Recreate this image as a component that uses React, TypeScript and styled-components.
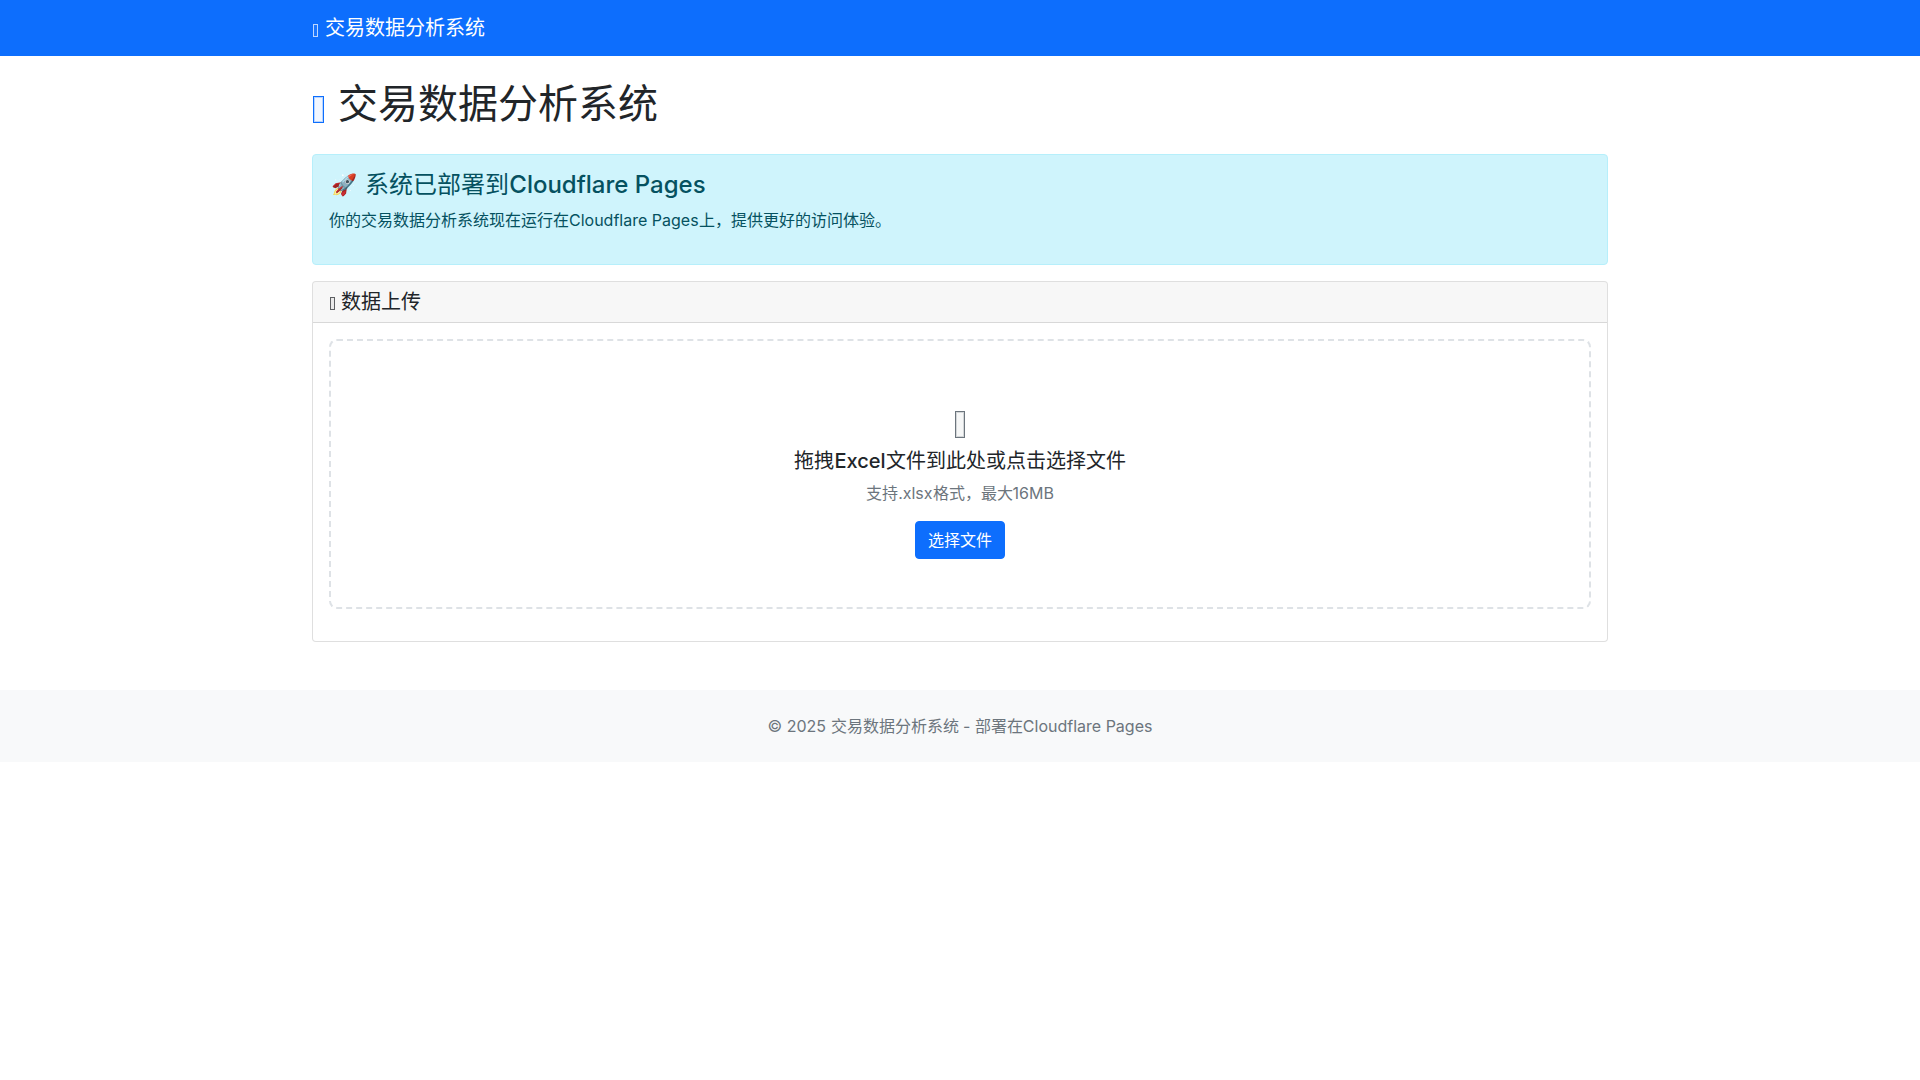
import React from "react";
import styled, { createGlobalStyle } from "styled-components";

const Global = createGlobalStyle`
  * , *::before, *::after { box-sizing: border-box; }
  body {
    margin: 0;
    font-family: Inter, sans-serif;
    font-size: 16px;
    line-height: 1.5;
    color: #212529;
    background: #fff;
  }
`;

/* The reference shows the empty "missing glyph" box of an icon font that did not load. */
const MissingGlyph = styled.i<{ $color?: string; $large?: boolean }>`
  display: inline-block;
  width: 0.27em;
  height: 0.67em;
  margin: 0 0.35em 0 0.03em;
  vertical-align: -0.12em;
  color: ${(p) => p.$color ?? "inherit"};
  border: 1px solid
    color-mix(in srgb, currentColor ${(p) => (p.$large ? 100 : 70)}%, transparent);
  background: color-mix(in srgb, currentColor 6%, transparent);
  box-shadow: ${(p) =>
    p.$large
      ? "inset 0 0 0 1px color-mix(in srgb, currentColor 25%, transparent)"
      : "none"};
`;
const CardGlyph = styled(MissingGlyph)`
  margin-right: 0.29em;
  vertical-align: -0.08em;
`;
const DropGlyph = styled(MissingGlyph)`
  display: block;
  font-size: 40px;
  margin: 22px auto 11px;
`;

const Navbar = styled.nav`
  background: #0d6efd;
  padding: 8px 0;
`;
const Container = styled.div`
  width: 1320px;
  margin: 0 auto;
  padding: 0 12px;
`;
const Brand = styled.a`
  display: inline-block;
  padding: 5px 0;
  font-size: 20px;
  line-height: 30px;
  color: #fff;
`;
const Main = styled(Container)`
  margin-top: 24px;
`;
const Title = styled.h1`
  margin: 0 0 26px;
  font-size: 40px;
  font-weight: 500;
  line-height: 1.2;
`;
const Alert = styled.div`
  padding: 16px;
  margin-bottom: 16px;
  color: #055160;
  background: #cff4fc;
  border: 1px solid #b6effb;
  border-radius: 4px;
`;
const AlertHeading = styled.h4`
  margin: 0 0 8px;
  font-size: 24px;
  font-weight: 500;
  line-height: 1.2;
`;
const Emoji = styled.span`
  display: inline-block;
  width: 29.9px;
  font-size: 21px;
  line-height: 1;
  text-align: center;
  vertical-align: 1px;
`;
const AlertText = styled.p`
  margin: 0 0 16px;
`;
const Card = styled.section`
  background: #fff;
  border: 1px solid rgba(0, 0, 0, 0.125);
  border-radius: 4px;
`;
const CardHeader = styled.div`
  padding: 8px 16px;
  background: rgba(0, 0, 0, 0.03);
  border-bottom: 1px solid rgba(0, 0, 0, 0.125);
  border-radius: 3px 3px 0 0;
`;
const CardTitle = styled.h5`
  margin: 0;
  font-size: 20px;
  font-weight: 500;
  line-height: 1.2;
`;
const CardBody = styled.div`
  padding: 16px;
`;
const DropZone = styled.div`
  padding: 48px;
  margin-bottom: 16px;
  border: 2px dashed #dee2e6;
  border-radius: 8px;
  text-align: center;
`;
const DropTitle = styled.h5`
  margin: 0 0 8px;
  font-size: 20px;
  font-weight: 500;
  line-height: 1.2;
`;
const DropHint = styled.p`
  margin: 0 0 16px;
  color: #6c757d;
`;
const Button = styled.button`
  display: inline-block;
  padding: 6px 12px;
  font: inherit;
  color: #fff;
  background: #0d6efd;
  border: 1px solid #0d6efd;
  border-radius: 4px;
`;
const Footer = styled.footer`
  margin-top: 48px;
  padding: 24px 0;
  background: #f8f9fa;
  text-align: center;
  color: #6c757d;
`;

export default function App() {
  return (
    <div lang="zh-CN">
      <Global />
      <Navbar>
        <Container>
          <Brand>
            <MissingGlyph />交易数据分析系统
          </Brand>
        </Container>
      </Navbar>
      <Main>
        <Title>
          <MissingGlyph $large $color="#0d6efd" />交易数据分析系统
        </Title>
        <Alert>
          <AlertHeading><Emoji>🚀</Emoji> 系统已部署到Cloudflare Pages</AlertHeading>
          <AlertText>你的交易数据分析系统现在运行在Cloudflare Pages上，提供更好的访问体验。</AlertText>
        </Alert>
        <Card>
          <CardHeader>
            <CardTitle>
              <CardGlyph />数据上传
            </CardTitle>
          </CardHeader>
          <CardBody>
            <DropZone>
              <DropGlyph $large $color="#6c757d" />
              <DropTitle>拖拽Excel文件到此处或点击选择文件</DropTitle>
              <DropHint>支持.xlsx格式，最大16MB</DropHint>
              <Button>选择文件</Button>
            </DropZone>
          </CardBody>
        </Card>
      </Main>
      <Footer>© 2025 交易数据分析系统 - 部署在Cloudflare Pages</Footer>
    </div>
  );
}
